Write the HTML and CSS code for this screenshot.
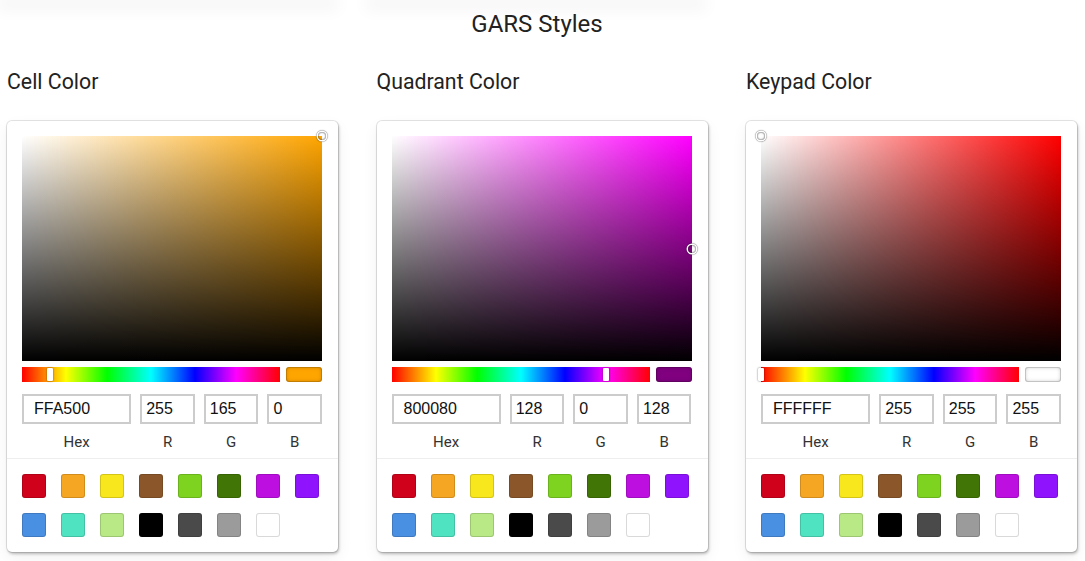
FILE: index.html
```html
<!DOCTYPE html>
<html>
<head>
<meta charset="utf-8">
<link rel="stylesheet" href="styles.css">
</head>
<body>
<div class="prev-row"><div class="prev-card"></div><div class="prev-card"></div></div>
<h1 class="title">GARS Styles</h1>
<div class="pickers">
  <section class="col">
    <h2 class="col-label">Cell Color</h2>
    <div class="card">
      <div class="sat" style="background-color:#ffa500"><span class="sat-ptr" style="left:100%;top:0%"></span></div>
      <div class="hue-row">
        <div class="hue"><span class="hue-ptr" style="left:10.8%"></span></div>
        <div class="cur" style="background:#ffa500"></div>
      </div>
      <div class="fields">
        <div class="field hex"><input class="inp" value="FFA500"><div class="lbl">Hex</div></div>
        <div class="field"><input class="inp" value="255"><div class="lbl">R</div></div>
        <div class="field"><input class="inp" value="165"><div class="lbl">G</div></div>
        <div class="field"><input class="inp" value="0"><div class="lbl">B</div></div>
      </div>
      <div class="swatches">
        <span class="sw" style="background:#D0021B"></span><span class="sw" style="background:#F5A623"></span><span class="sw" style="background:#F8E71C"></span><span class="sw" style="background:#8B572A"></span><span class="sw" style="background:#7ED321"></span><span class="sw" style="background:#417505"></span><span class="sw" style="background:#BD10E0"></span><span class="sw" style="background:#9013FE"></span><span class="sw" style="background:#4A90E2"></span><span class="sw" style="background:#50E3C2"></span><span class="sw" style="background:#B8E986"></span><span class="sw" style="background:#000000"></span><span class="sw" style="background:#4A4A4A"></span><span class="sw" style="background:#9B9B9B"></span><span class="sw" style="background:#FFFFFF"></span>
      </div>
    </div>
  </section>
  <section class="col">
    <h2 class="col-label">Quadrant Color</h2>
    <div class="card">
      <div class="sat" style="background-color:#ff00ff"><span class="sat-ptr" style="left:100%;top:50%"></span></div>
      <div class="hue-row">
        <div class="hue"><span class="hue-ptr" style="left:83.3%"></span></div>
        <div class="cur" style="background:#800080"></div>
      </div>
      <div class="fields">
        <div class="field hex"><input class="inp" value="800080"><div class="lbl">Hex</div></div>
        <div class="field"><input class="inp" value="128"><div class="lbl">R</div></div>
        <div class="field"><input class="inp" value="0"><div class="lbl">G</div></div>
        <div class="field"><input class="inp" value="128"><div class="lbl">B</div></div>
      </div>
      <div class="swatches">
        <span class="sw" style="background:#D0021B"></span><span class="sw" style="background:#F5A623"></span><span class="sw" style="background:#F8E71C"></span><span class="sw" style="background:#8B572A"></span><span class="sw" style="background:#7ED321"></span><span class="sw" style="background:#417505"></span><span class="sw" style="background:#BD10E0"></span><span class="sw" style="background:#9013FE"></span><span class="sw" style="background:#4A90E2"></span><span class="sw" style="background:#50E3C2"></span><span class="sw" style="background:#B8E986"></span><span class="sw" style="background:#000000"></span><span class="sw" style="background:#4A4A4A"></span><span class="sw" style="background:#9B9B9B"></span><span class="sw" style="background:#FFFFFF"></span>
      </div>
    </div>
  </section>
  <section class="col">
    <h2 class="col-label">Keypad Color</h2>
    <div class="card">
      <div class="sat" style="background-color:#ff0000"><span class="sat-ptr" style="left:0%;top:0%"></span></div>
      <div class="hue-row">
        <div class="hue"><span class="hue-ptr" style="left:0%"></span></div>
        <div class="cur" style="background:#ffffff"></div>
      </div>
      <div class="fields">
        <div class="field hex"><input class="inp" value="FFFFFF"><div class="lbl">Hex</div></div>
        <div class="field"><input class="inp" value="255"><div class="lbl">R</div></div>
        <div class="field"><input class="inp" value="255"><div class="lbl">G</div></div>
        <div class="field"><input class="inp" value="255"><div class="lbl">B</div></div>
      </div>
      <div class="swatches">
        <span class="sw" style="background:#D0021B"></span><span class="sw" style="background:#F5A623"></span><span class="sw" style="background:#F8E71C"></span><span class="sw" style="background:#8B572A"></span><span class="sw" style="background:#7ED321"></span><span class="sw" style="background:#417505"></span><span class="sw" style="background:#BD10E0"></span><span class="sw" style="background:#9013FE"></span><span class="sw" style="background:#4A90E2"></span><span class="sw" style="background:#50E3C2"></span><span class="sw" style="background:#B8E986"></span><span class="sw" style="background:#000000"></span><span class="sw" style="background:#4A4A4A"></span><span class="sw" style="background:#9B9B9B"></span><span class="sw" style="background:#FFFFFF"></span>
      </div>
    </div>
  </section>
</div>
</body>
</html>
```

FILE: styles.css
```css
* { box-sizing: border-box; }
html, body { margin: 0; padding: 0; background: #fff; overflow: hidden; }
body { font-family: Roboto, "Liberation Sans", sans-serif; color: #222; width: 1085px; height: 561px; }

.prev-row { display: flex; gap: 40px; height: 0; padding: 0 4px; }
.prev-card { width: 328px; height: 0; box-shadow: 0 3px 16px 7px rgba(0,0,0,0.045); }

.title { margin: 10px 0 0; padding-right: 11px; font-size: 24px; line-height: 28px; font-weight: 400; text-align: center; color: #222; }

.pickers { display: grid; grid-template-columns: repeat(3, 331px); column-gap: 38.5px; padding: 0 7px; margin-top: 32px; }
.col-label { margin: 0 0 27px; font-size: 21.3px; line-height: 24px; font-weight: 400; color: #222; }

.card { background: #fff; border-radius: 5px; padding: 15px 15px 15px; box-shadow: 0 0 0 1px rgba(0,0,0,0.1), 1px 2px 3px rgba(0,0,0,0.25), 0 6px 16px rgba(0,0,0,0.06); }

.sat { position: relative; height: 225px; width: 300px;
  background-image: linear-gradient(to top, #000, rgba(0,0,0,0)), linear-gradient(to right, #fff, rgba(255,255,255,0)); }
.sat-ptr { position: absolute; width: 8px; height: 8px; margin: -4px 0 0 -4px; border-radius: 50%;
  box-shadow: 0 0 0 1.5px #fff, inset 0 0 1px 1px rgba(0,0,0,0.3), 0 0 1px 2px rgba(0,0,0,0.4); }

.hue-row { display: flex; gap: 6px; margin-top: 6px; width: 300px; }
.hue { position: relative; flex: 1; height: 15px;
  background: linear-gradient(to right, #f00 0%, #ff0 17%, #0f0 33%, #0ff 50%, #00f 67%, #f0f 83%, #f00 100%); }
.hue-ptr { position: absolute; top: 1px; width: 6px; height: 13px; margin-left: -3px; background: #fff; border-radius: 1px; box-shadow: 0 0 2px rgba(0,0,0,0.6); }
.cur { width: 36px; height: 15px; border-radius: 3px; box-shadow: inset 0 0 0 1px rgba(0,0,0,0.15), inset 0 0 4px rgba(0,0,0,0.25); }

.fields { display: flex; gap: 9px; margin-top: 12px; width: 300px; }
.field { flex: 1; min-width: 0; }
.field.hex { flex: 2; }
.inp { display: block; width: 100%; height: 30px; border: 2px solid #ccc; border-radius: 0; padding: 0 4px; margin: 0;
  font-family: "Liberation Sans", Arial, sans-serif; font-size: 16px; color: #111; background: #fff; outline: none; }
.hex .inp { padding-left: 10px; }
.lbl { text-align: center; font-size: 15px; line-height: 18px; color: #333; padding: 9px 0 7px; }

.swatches { display: grid; grid-template-columns: repeat(8, 24px); column-gap: 15px; row-gap: 15px;
  margin: 0 -15px; padding: 15px 15px 0; border-top: 1px solid #eee; }
.sw { width: 24px; height: 24px; border-radius: 3px; box-shadow: inset 0 0 0 1px rgba(0,0,0,0.15); }
```
